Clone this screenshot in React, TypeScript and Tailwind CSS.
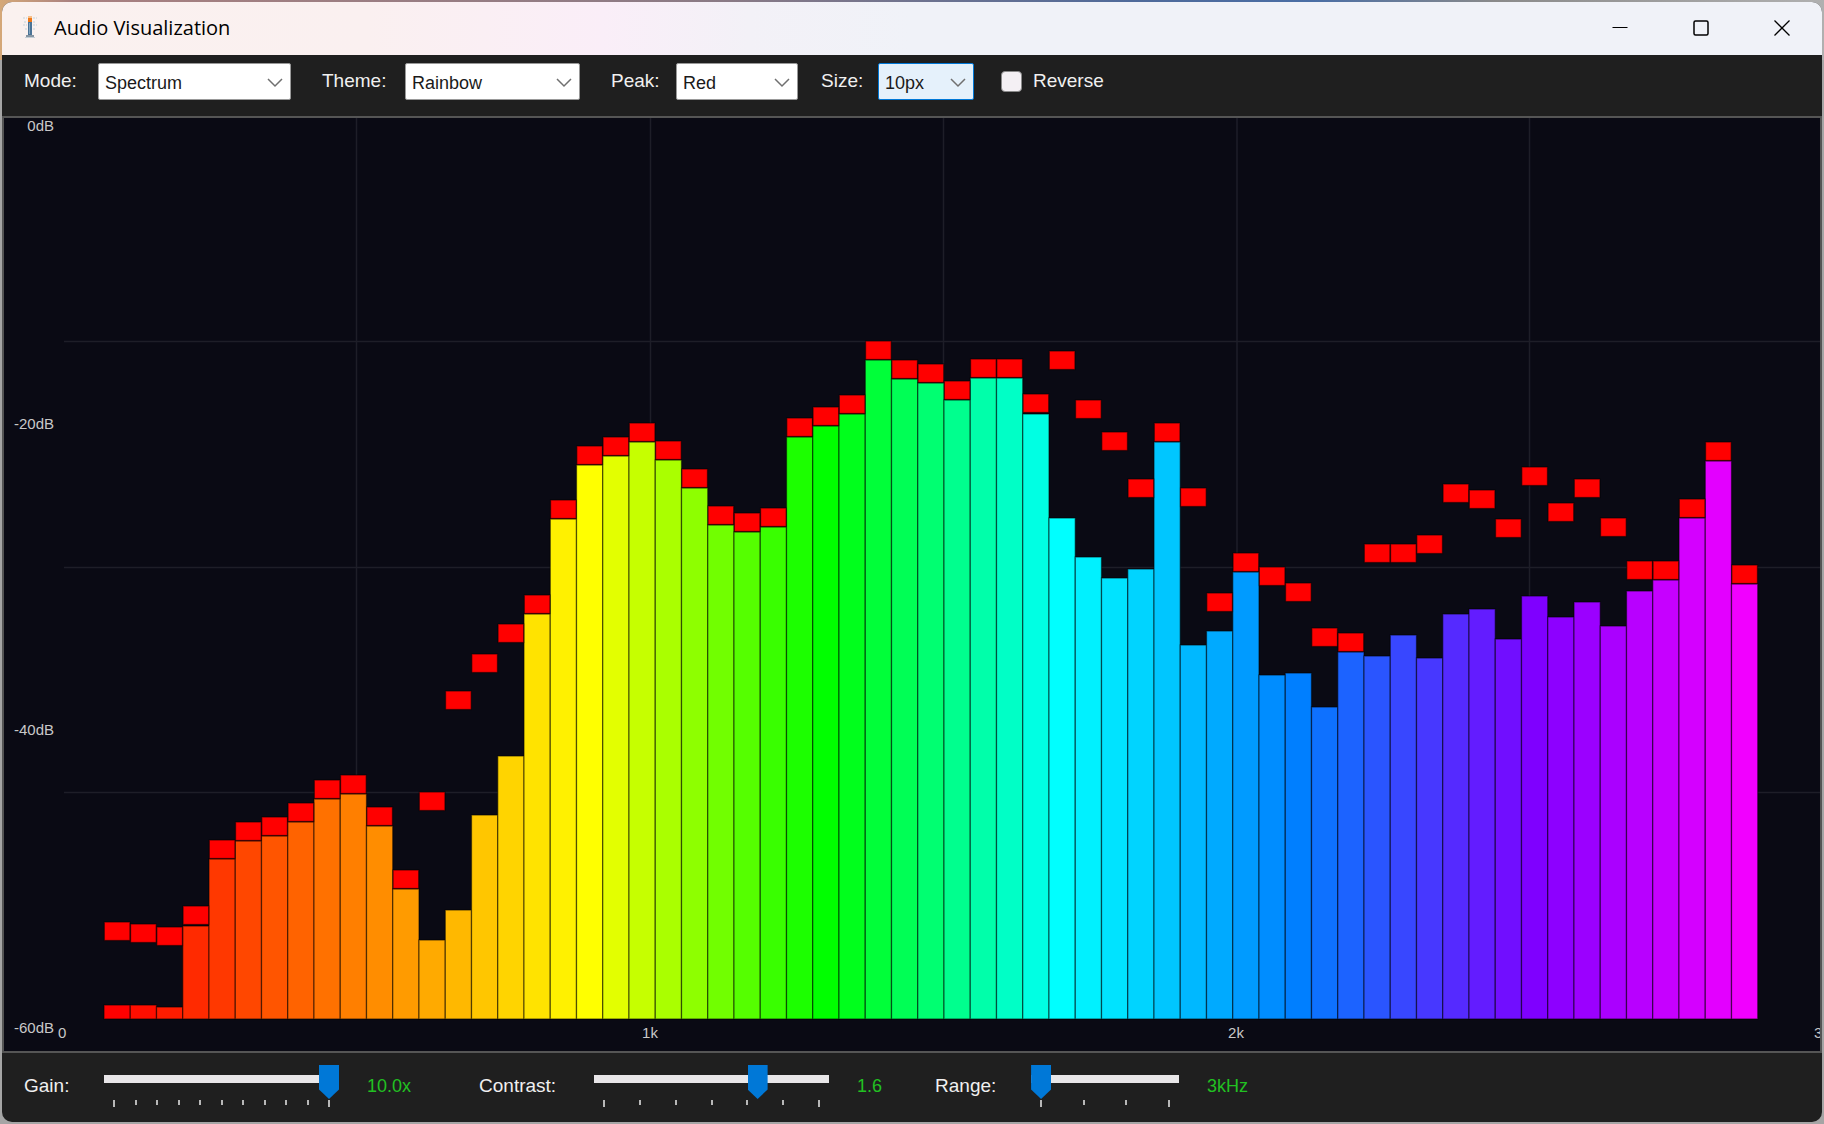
import React from "react";

type Rgb = [number, number, number];

const rainbow: Rgb[] = [
  [255, 0, 0],
  [255, 127, 0],
  [255, 255, 0],
  [0, 255, 0],
  [0, 255, 255],
  [0, 127, 255],
  [127, 0, 255],
  [255, 0, 255],
];

// [top of the bar, top of the peak marker], in plot units
const bands: [number, number][] = [
  [1005, 922], [1005, 924], [1007, 927], [926, 906], [859, 840], [841, 822],
  [836, 817], [822, 803], [799, 780], [794, 775], [826, 807], [889, 870],
  [940, 792], [910, 691], [815, 654], [756, 624], [614, 595], [519, 500],
  [465, 446], [456, 437], [442, 423], [460, 441], [488, 469], [525, 506],
  [532, 513], [527, 508], [437, 418], [426, 407], [414, 395], [360, 341],
  [379, 360], [383, 364], [400, 381], [378, 359], [378, 359], [414, 394],
  [518, 351], [557, 400], [578, 432], [569, 479], [442, 423], [645, 488],
  [631, 593], [572, 553], [675, 567], [673, 583], [707, 628], [652, 633],
  [656, 544], [635, 544], [658, 535], [614, 484], [609, 490], [639, 519],
  [596, 467], [617, 503], [602, 479], [626, 518], [591, 561], [580, 561],
  [518, 499], [461, 442], [584, 565],
];

const LEFT = 4;
const TOP = 118;
const WIDTH = 1816;
const HEIGHT = 933;
const FIRST_BAR = 104;
const PITCH = 26.25;
const BASE = 1019;

const px = (x: number) => `${((x - LEFT) / WIDTH) * 100}%`;
const py = (y: number) => `${((y - TOP) / HEIGHT) * 100}%`;

function barColor(i: number) {
  const seg = Math.floor(i / 9);
  const t = (i % 9) / 9;
  const a = rainbow[seg];
  const b = rainbow[seg + 1];
  return `rgb(${a.map((v, k) => Math.round(v + (b[k] - v) * t)).join(",")})`;
}

function Spectrum() {
  return (
    <svg role="img" aria-label="Spectrum" className="min-h-80 w-full flex-1 bg-[#0a0a14]">
      <svg
        width="100%"
        height="100%"
        viewBox={`${LEFT} ${TOP} ${WIDTH} ${HEIGHT}`}
        preserveAspectRatio="none"
      >
        <g stroke="#1e1e28" strokeWidth="1.5">
          {[356.5, 650.5, 943.5, 1237, 1529.5].map((x) => (
            <line key={x} x1={x} x2={x} y1={TOP} y2={BASE} />
          ))}
          {[341.5, 567.5, 792.5].map((y) => (
            <line key={y} x1={64} x2={LEFT + WIDTH} y1={y} y2={y} />
          ))}
        </g>
        <g stroke="#000" strokeOpacity="0.5" strokeWidth="1.3">
          {bands.map(([top], i) => (
            <rect
              key={i}
              x={FIRST_BAR + i * PITCH}
              y={top}
              width={PITCH}
              height={BASE - top}
              fill={barColor(i)}
            />
          ))}
          {bands.map(([, peak], i) => (
            <rect
              key={i}
              x={FIRST_BAR + 0.3 + i * PITCH}
              y={peak}
              width={PITCH - 0.6}
              height={18.5}
              fill="#f00"
            />
          ))}
        </g>
      </svg>
      <g className="fill-[#c8c8c8] text-[15px]">
        <text x={px(54)} y={py(131)} textAnchor="end">0dB</text>
        <text x={px(54)} y={py(429)} textAnchor="end">-20dB</text>
        <text x={px(54)} y={py(735)} textAnchor="end">-40dB</text>
        <text x={px(54)} y={py(1033)} textAnchor="end">-60dB</text>
        <text x={px(58)} y={py(1038)}>0</text>
        <text x={px(650)} y={py(1038)} textAnchor="middle">1k</text>
        <text x={px(1236)} y={py(1038)} textAnchor="middle">2k</text>
        <text x={px(1814)} y={py(1038)}>3k</text>
      </g>
    </svg>
  );
}

function Picker({
  id,
  label,
  value,
  options,
  labelClass,
  selectClass,
}: {
  id: string;
  label: string;
  value: string;
  options: string[];
  labelClass: string;
  selectClass: string;
}) {
  return (
    <div className="flex items-start">
      <label htmlFor={id} className={`mt-3 text-[19px] leading-7 text-[#f0f0f0] ${labelClass}`}>
        {label}
      </label>
      <div className="relative mt-2">
        <select
          id={id}
          defaultValue={value}
          className={`block h-[37px] appearance-none rounded-xs border pt-0.5 pl-1.5 leading-7 text-[#1a1a1a] ${selectClass}`}
        >
          {options.map((o) => (
            <option key={o}>{o}</option>
          ))}
        </select>
        <svg
          viewBox="0 0 16 10"
          className="pointer-events-none absolute top-[15px] right-2 h-2.5 w-4"
          fill="none"
          stroke="#707070"
          strokeWidth="1.5"
        >
          <path d="M1 1l7 7 7-7" />
        </svg>
      </div>
    </div>
  );
}

function Slider({
  id,
  label,
  min,
  max,
  step,
  value,
  text,
  ticks,
  labelClass,
  trackClass,
}: {
  id: string;
  label: string;
  min: number;
  max: number;
  step: number;
  value: number;
  text: string;
  ticks: number;
  labelClass: string;
  trackClass: string;
}) {
  return (
    <div className="flex items-start">
      <label htmlFor={id} className={`mt-[19px] text-[19px] leading-7 text-[#f0f0f0] ${labelClass}`}>
        {label}
      </label>
      <div className={`flex flex-col pt-[22px] ${trackClass}`}>
        <input
          id={id}
          type="range"
          min={min}
          max={max}
          step={step}
          defaultValue={value}
          className="m-0 block h-2 w-full appearance-none bg-[#e8e6e8] [&::-webkit-slider-thumb]:h-[34px] [&::-webkit-slider-thumb]:w-5 [&::-webkit-slider-thumb]:translate-y-[3px] [&::-webkit-slider-thumb]:appearance-none [&::-webkit-slider-thumb]:bg-[#0078d7] [&::-webkit-slider-thumb]:[clip-path:polygon(0_0,100%_0,100%_72%,50%_100%,0_72%)]"
        />
        <div className="mt-[17px] flex items-start justify-between px-[9px]">
          {Array.from({ length: ticks }, (_, i) => (
            <span
              key={i}
              className={`w-0.5 bg-[#b8b8b8] ${i === 0 || i === ticks - 1 ? "h-[7px]" : "h-[5px]"}`}
            />
          ))}
        </div>
      </div>
      <output htmlFor={id} className="mt-[19px] ml-7 leading-7 text-[#22c022]">
        {text}
      </output>
    </div>
  );
}

export default function App() {
  return (
    <div className="flex min-h-screen bg-[#a5a5a5] bg-[linear-gradient(to_right,#d5a878,#a88080_4%,#8a7a85_40%,#4f6a9a_62%,#4a6ea5_72%,#8a8a8a_82%,#b0b0b0)] bg-[length:100%_60px] bg-no-repeat p-0.5 font-['Liberation_Sans',Arial,sans-serif] text-lg">
      <div className="flex flex-1 flex-col overflow-hidden rounded-[10px] bg-[#1f1f1f]">
        <header className="flex h-[53px] items-center bg-[linear-gradient(to_right,#faf1ef,#faf0f0_20%,#faeef8_33%,#f3f1f7_41%,#f0f2f8_50%)] pb-0.5 pl-5">
          <svg viewBox="0 0 16 26" className="h-[26px] w-4" aria-hidden="true">
            <g stroke="#c3d3da" strokeWidth="1">
              <path d="M1 3h4M11 3h4M2 7h3M11 7h3M1 10h4M11 10h4M3 14h2M11 14h2" strokeDasharray="2 1" />
            </g>
            <path d="M6 6h4v14H6z" fill="#4a7396" />
            <path d="M7 8h1v11H7z" fill="#86a7c0" />
            <path d="M4 20h8v2H4z" fill="#8796a3" />
            <path d="M3 22h10v1H3z" fill="#c4ced6" />
            <path d="M6 3h4v4H6z" fill="#f07818" />
            <path d="M6 1h4v2H6z" fill="#f7c08a" />
          </svg>
          <h1 className="ml-4 flex-1 font-['Open_Sans','Noto_Sans',sans-serif] text-xl leading-7 text-black">
            Audio Visualization
          </h1>
          <button aria-label="Minimize" className="flex h-full w-[81px] items-center justify-center">
            <svg viewBox="0 0 16 16" className="size-4" stroke="#000" strokeWidth="1.2" fill="none">
              <path d="M0.5 7.5h15" />
            </svg>
          </button>
          <button aria-label="Maximize" className="flex h-full w-[81px] items-center justify-center">
            <svg viewBox="0 0 16 16" className="size-4" stroke="#000" strokeWidth="1.5" fill="none">
              <rect x="1" y="1" width="14" height="14" rx="1.5" />
            </svg>
          </button>
          <button aria-label="Close" className="flex h-full w-[81px] items-center justify-center">
            <svg viewBox="0 0 16 16" className="size-4" stroke="#000" strokeWidth="1.3" fill="none">
              <path d="M0.5 0.5l15 15M15.5 0.5l-15 15" />
            </svg>
          </button>
        </header>

        <div className="flex h-[61px] items-start pl-[22px]">
          <Picker id="mode" label="Mode:" value="Spectrum" options={["Spectrum", "Waveform"]} labelClass="w-[74px]" selectClass="w-[193px] border-[#999] bg-white" />
          <div className="w-[31px]" />
          <Picker id="theme" label="Theme:" value="Rainbow" options={["Rainbow", "Classic"]} labelClass="w-[83px]" selectClass="w-[175px] border-[#999] bg-white" />
          <div className="w-[31px]" />
          <Picker id="peak" label="Peak:" value="Red" options={["Red", "White"]} labelClass="w-[65px]" selectClass="w-[122px] border-[#999] bg-white" />
          <div className="w-[23px]" />
          <Picker id="size" label="Size:" value="10px" options={["10px", "20px"]} labelClass="w-[57px]" selectClass="w-24 border-[#0078d7] bg-[#e5f1fb]" />
          <label className="mt-3 ml-[27px] flex items-center gap-[11px] text-[19px] leading-7 text-[#f0f0f0]">
            <input type="checkbox" className="size-[21px] appearance-none rounded-[4px] border border-[#8a8a8a] bg-[#f4f0f4] checked:bg-[#0078d7]" />
            Reverse
          </label>
        </div>

        <main className="flex flex-1 flex-col border-2 border-[#555]">
          <Spectrum />
        </main>

        <footer className="flex h-[69px] items-start pl-[22px]">
          <Slider id="gain" label="Gain:" min={0} max={10} step={0.1} value={10} text="10.0x" ticks={11} labelClass="w-20" trackClass="w-[235px]" />
          <div className="w-[68px]" />
          <Slider id="contrast" label="Contrast:" min={0.6} max={2} step={0.1} value={1.6} text="1.6" ticks={7} labelClass="w-[115px]" trackClass="w-[235px]" />
          <div className="w-[53px]" />
          <Slider id="range" label="Range:" min={3} max={24} step={1} value={3} text="3kHz" ticks={4} labelClass="w-24" trackClass="w-[148px]" />
        </footer>
      </div>
    </div>
  );
}
